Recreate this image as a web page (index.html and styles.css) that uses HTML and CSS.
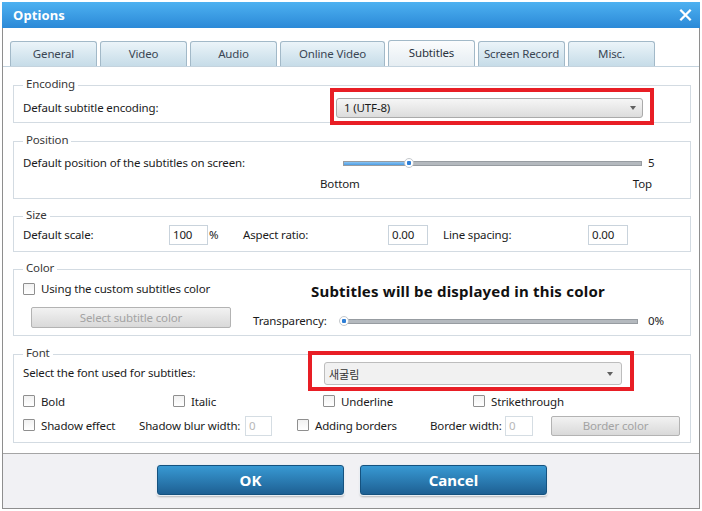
FILE: index.html
```html
<!DOCTYPE html>
<html>
<head>
<meta charset="utf-8">
<link rel="stylesheet" href="styles.css">
</head>
<body>
<div class="window">
  <div class="titlebar">
    <span class="title">Options</span>
    <svg class="close" width="13" height="12" viewBox="0 0 13 12"><path d="M1.3 0.8 L11.7 11.2 M11.7 0.8 L1.3 11.2" stroke="#fff" stroke-width="2.3" fill="none"/></svg>
  </div>
  <div class="frame">
    <div class="tabs">
      <div class="tab">General</div>
      <div class="tab">Video</div>
      <div class="tab">Audio</div>
      <div class="tab wide">Online Video</div>
      <div class="tab active">Subtitles</div>
      <div class="tab">Screen Record</div>
      <div class="tab">Misc.</div>
    </div>
    <div class="content">
      <fieldset class="group">
        <legend>Encoding</legend>
        <div class="row enc-row">
          <span class="lbl enc-lbl">Default subtitle encoding:</span>
          <div class="combo combo-enc hl hl-enc"><span>1 (UTF-8)</span><span class="arrow"></span></div>
        </div>
      </fieldset>

      <fieldset class="group">
        <legend>Position</legend>
        <div class="row pos-row">
          <span class="lbl pos-lbl">Default position of the subtitles on screen:</span>
          <div class="slider pos-slider">
            <div class="track"><div class="fill" style="width:22%"></div></div>
            <div class="thumb" style="left:22%"></div>
          </div>
          <span class="val">5</span>
        </div>
        <div class="row scale-labels">
          <span>Bottom</span><span>Top</span>
        </div>
      </fieldset>

      <fieldset class="group">
        <legend>Size</legend>
        <div class="row size-row">
          <span class="lbl w146">Default scale:</span>
          <div class="input w39">100</div>
          <span class="pct">%</span>
          <span class="lbl w145 ml-aspect">Aspect ratio:</span>
          <div class="input w40">0.00</div>
          <span class="lbl w145 ml-line">Line spacing:</span>
          <div class="input w40">0.00</div>
        </div>
      </fieldset>

      <fieldset class="group">
        <legend>Color</legend>
        <div class="row color-row1">
          <label class="check w288"><span class="cb"></span>Using the custom subtitles color</label>
          <span class="preview">Subtitles will be displayed in this color</span>
        </div>
        <div class="row color-row2">
          <div class="btn-dis select-color">Select subtitle color</div>
          <span class="lbl trans-lbl low">Transparency:</span>
          <div class="slider trans-slider low">
            <div class="track"></div>
            <div class="thumb" style="left:1%"></div>
          </div>
          <span class="val val-pct low">0%</span>
        </div>
      </fieldset>

      <fieldset class="group">
        <legend>Font</legend>
        <div class="row font-row1">
          <span class="lbl font-lbl">Select the font used for subtitles:</span>
          <div class="combo combo-font hl hl-font"><span class="ko">새굴림</span><span class="arrow"></span></div>
        </div>
        <div class="row font-row2">
          <label class="check w150"><span class="cb"></span>Bold</label>
          <label class="check w150"><span class="cb"></span>Italic</label>
          <label class="check w150"><span class="cb"></span>Underline</label>
          <label class="check"><span class="cb"></span>Strikethrough</label>
        </div>
        <div class="row font-row3">
          <label class="check w116"><span class="cb"></span>Shadow effect</label>
          <span class="lbl w106">Shadow blur width:</span>
          <div class="input disabled w27">0</div>
          <label class="check w133 ml-add"><span class="cb"></span>Adding borders</label>
          <span class="lbl w75">Border width:</span>
          <div class="input disabled w28">0</div>
          <div class="btn-dis border-color">Border color</div>
        </div>
      </fieldset>
    </div>
    <div class="footer">
      <button class="action">OK</button>
      <button class="action">Cancel</button>
    </div>
  </div>
</div>
</body>
</html>
```

FILE: styles.css
```css
* { box-sizing: border-box; }
html, body { margin: 0; padding: 0; }
body {
  width: 702px;
  height: 511px;
  overflow: hidden;
  background: #ffffff;
  font-family: "Noto Sans", "Open Sans", "Noto Sans CJK KR", sans-serif;
  font-size: 11.5px;
  letter-spacing: -0.15px;
  color: #1b1b1b;
}

.window {
  margin: 2px 0 0 2px;
  width: 698px;
  height: 507px;
  display: flex;
  flex-direction: column;
}

.titlebar {
  height: 26px;
  flex: none;
  display: flex;
  align-items: center;
  justify-content: space-between;
  padding: 0 8px 0 11px;
  background: linear-gradient(#4db1f1, #2b89d7);
}
.title {
  color: #fff;
  font-weight: bold;
  font-size: 13px;
  letter-spacing: 0.1px;
}
.close { display: block; }

.frame {
  flex: 1;
  display: flex;
  flex-direction: column;
  border: 1px solid #8e8e8e;
  border-top: 0;
  background: #fff;
}

.tabs {
  flex: none;
  display: flex;
  gap: 3px;
  padding: 13px 0 0 7px;
  height: 39px;
  border-bottom: 1px solid #c4d3de;
}
.tab {
  width: 87px;
  height: 25px;
  display: flex;
  align-items: center;
  justify-content: center;
  padding-bottom: 2px;
  border: 1px solid #a2b9c8;
  border-bottom: 0;
  border-radius: 3px 3px 0 0;
  background: linear-gradient(#ebf4f9, #c6dce8);
  color: #3a4654;
}
.tab.wide { width: 105px; }
.tab.active {
  margin-top: -1px;
  height: 26px;
  background: linear-gradient(#fbfcfd, #e5edf2);
  color: #2a3340;
}

.content {
  flex: 1;
  padding: 10px 8px 0 10px;
}

.group {
  margin: 0 0 9px;
  padding: 0 8px 0 9px;
  border: 1px solid #d3dbe2;
  min-width: 0;
}
.group:first-child { margin-bottom: 10px; }
.group:last-child { margin-top: 10px; margin-bottom: 0; }
.group:nth-child(4) { margin-bottom: 0; }
legend {
  padding: 0 3px 2px;
  margin-left: 0;
  line-height: 14px;
  color: #383838;
}

.row {
  display: flex;
  align-items: center;
  white-space: nowrap;
}
.lbl, .val, .pct, .check, .scale-labels span { padding-bottom: 2px; }
.lbl { flex: none; }

/* Encoding */
.enc-row { height: 20px; margin: 5px 0 4px; }
.enc-lbl { width: 313px; }
.combo {
  position: relative;
  display: flex;
  align-items: center;
  justify-content: space-between;
  border: 1px solid #aaaaaa;
  border-radius: 3px;
  flex: none;
}
.combo-enc {
  width: 307px;
  height: 20px;
  padding: 0 6px 1px 7px;
  background: linear-gradient(#f6f6f6, #dcdcdc);
}
.arrow {
  width: 0;
  height: 0;
  border-left: 3.5px solid transparent;
  border-right: 3.5px solid transparent;
  border-top: 4px solid #606060;
}
.hl::after {
  content: "";
  position: absolute;
  border: 4px solid #e81e25;
  pointer-events: none;
}
.hl-enc::after { top: -11px; left: -7px; right: -12px; bottom: -8px; }
.hl-font::after { top: -12px; left: -17px; right: -13px; bottom: -7px; }

/* Position */
.pos-row { height: 18px; margin-top: 5px; }
.pos-lbl { width: 320px; }
.slider {
  position: relative;
  flex: none;
  height: 12px;
  display: flex;
  align-items: center;
}
.pos-slider { width: 299px; }
.track {
  width: 100%;
  height: 5px;
  border: 1px solid #979ca1;
  background: #b4b9be;
  overflow: hidden;
}
.fill {
  height: 100%;
  background: linear-gradient(#8ac4f3, #4d9de4);
}
.thumb {
  position: absolute;
  top: 1px;
  width: 10px;
  height: 10px;
  margin-left: -5px;
  border-radius: 50%;
  border: 1px solid #c4c8cc;
  background: radial-gradient(circle, #2f7fd6 0 2px, #ffffff 2.5px);
}
.val { margin-left: 6px; }
.scale-labels {
  height: 16px;
  margin: 4px 0 6px 297px;
  width: 332px;
  justify-content: space-between;
}

/* Size */
.size-row { height: 20px; margin: 1px 0 6px; }
.w146 { width: 146px; }
.w145 { width: 145px; }
.w106 { width: 106px; }
.w75 { width: 75px; }
.input {
  flex: none;
  height: 20px;
  border: 1px solid #c9d3dc;
  background: #fff;
  padding: 0 0 1px 3px;
  display: flex;
  align-items: center;
}
.w39 { width: 39px; }
.w40 { width: 40px; }
.w27 { width: 27px; }
.w28 { width: 28px; }
.input.disabled { color: #b8b8b8; border-color: #d5dde3; }
.pct { width: 10px; margin-left: 1px; }
.ml-aspect { margin-left: 24px; }
.ml-line { margin-left: 15px; }

/* Checkboxes */
.check { display: flex; align-items: center; flex: none; }
.cb {
  width: 12px;
  height: 12px;
  margin-right: 6px;
  border: 1px solid #8f8f8f;
  border-radius: 1px;
  background: linear-gradient(#f1f1f1, #ffffff);
  flex: none;
}
.w288 { width: 288px; }
.w150 { width: 150px; }
.w116 { width: 116px; }
.w133 { width: 133px; }
.ml-add { margin-left: 25px; }

/* Color */
.color-row1 { height: 20px; margin-top: 4px; }
.color-row1 .check { margin-top: -3px; }
.preview {
  font-weight: bold;
  font-size: 15px;
  letter-spacing: 0.2px;
  color: #111;
  margin-top: -1px;
}
.color-row2 { height: 21px; margin: 6px 0 7px; }
.color-row2 .low { margin-top: 7px; }
.btn-dis {
  flex: none;
  display: flex;
  align-items: center;
  justify-content: center;
  padding-bottom: 1px;
  border: 1px solid #b3b3b3;
  border-radius: 2px;
  background: linear-gradient(#f2f2f2, #d9d9d9);
  color: #a3a3a3;
}
.select-color { width: 200px; height: 21px; margin-left: 8px; }
.trans-lbl { width: 88px; margin-left: 22px; }
.trans-slider { width: 297px; }
.val-pct { margin-left: 10px; }

/* Font */
.font-row1 { height: 23px; }
.font-lbl { width: 301px; }
.combo-font {
  width: 298px;
  height: 23px;
  padding: 0 8px 0 4px;
  background: #f1f1f1;
  border-color: #bdbdbd;
}
.ko {
  font-family: "Noto Sans CJK KR", sans-serif;
  font-size: 11px;
  letter-spacing: 0;
  color: #333;
}
.font-row2 { height: 18px; margin-top: 8px; }
.font-row3 { height: 20px; margin: 5px 0 6px; }
.border-color { width: 129px; height: 20px; margin-left: 18px; }

/* Footer */
.footer {
  flex: none;
  height: 55px;
  border-top: 1px solid #a5a5a5;
  background: #f1f1f4;
  display: flex;
  justify-content: center;
  align-items: flex-start;
  gap: 16px;
  padding: 11px 0 0 2px;
}
.action {
  width: 187px;
  height: 30px;
  border: 1px solid #15527f;
  border-radius: 3px;
  background: linear-gradient(#3899d3, #1e6093);
  box-shadow: 0 0 0 1px #e9eef3, 0 2px 2px rgba(0,0,0,0.25);
  color: #fff;
  font-family: "Noto Sans", "Open Sans", sans-serif;
  font-weight: bold;
  font-size: 15px;
  letter-spacing: 0;
  padding: 0 0 1px;
}
```
